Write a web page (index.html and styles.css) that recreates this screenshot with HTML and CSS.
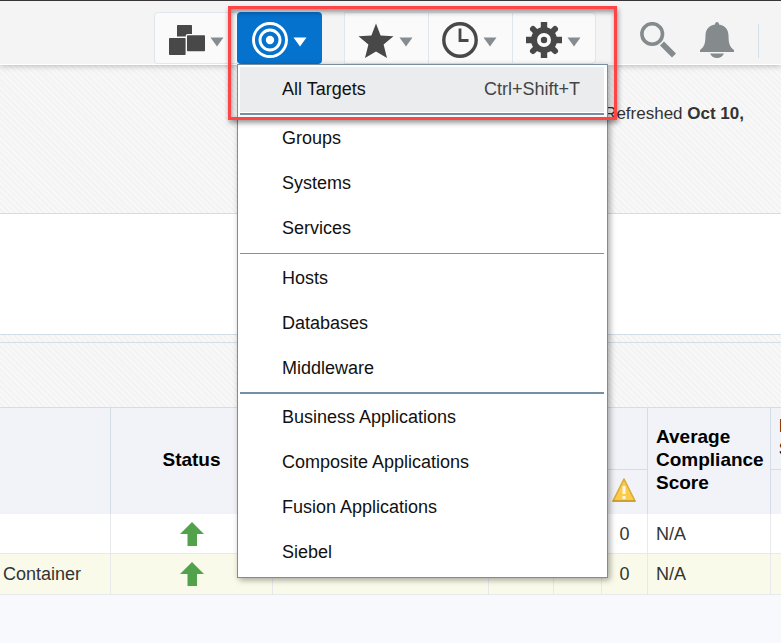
FILE: index.html
```html
<!DOCTYPE html>
<html lang="en">
<head>
<meta charset="utf-8">
<title>Targets</title>
<link rel="stylesheet" href="styles.css">
</head>
<body>
<header class="toolbar">
  <nav class="menus" aria-label="Main">
    <button class="tool first" type="button" aria-label="Enterprise">
      <svg class="icon" viewBox="0 0 36 36"><g fill="#484848" stroke="#fafafa" stroke-width="1.4"><rect x="7.3" y="2.3" width="16.4" height="16.4" rx="1.5"/><rect x="17.3" y="12.6" width="19.4" height="17.4" rx="1.5"/><rect x="-.7" y="15.3" width="18" height="18.4" rx="1.5"/></g></svg>
      <svg class="caret" viewBox="0 0 14 10"><path d="M.5.5h13L7 9.5z"/></svg>
    </button>
    <div class="menu-anchor">
      <button class="tool active" type="button" aria-label="Targets" aria-expanded="true">
        <svg class="icon" viewBox="0 0 36 36"><g fill="none" stroke="#fff" stroke-width="2.9"><circle cx="18" cy="18" r="16.5"/><circle cx="18" cy="18" r="10"/></g><circle cx="18" cy="18" r="4.2" fill="#fff"/></svg>
        <svg class="caret" viewBox="0 0 14 10"><path d="M.5.5h13L7 9.5z"/></svg>
      </button>
      <div class="menu">
        <button class="item selected" type="button"><span>All Targets</span><kbd>Ctrl+Shift+T</kbd></button>
        <hr class="thick">
        <button class="item" type="button">Groups</button>
        <button class="item" type="button">Systems</button>
        <button class="item" type="button">Services</button>
        <hr>
        <button class="item" type="button">Hosts</button>
        <button class="item" type="button">Databases</button>
        <button class="item" type="button">Middleware</button>
        <hr class="thick">
        <button class="item" type="button">Business Applications</button>
        <button class="item" type="button">Composite Applications</button>
        <button class="item" type="button">Fusion Applications</button>
        <button class="item" type="button">Siebel</button>
      </div>
      <div class="callout"></div>
    </div>
    <div class="tool-group">
      <button class="tool" type="button" aria-label="Favorites">
        <svg class="icon" viewBox="0 0 36 36"><path fill="#484848" d="M18 1.5 22.6 13.6 35.5 14.200 25.600 22.500 29 36 18 29.500 7 36 10.400 22.500.5 14.200 13.400 13.600z"/></svg>
        <svg class="caret" viewBox="0 0 14 10"><path d="M.5.5h13L7 9.5z"/></svg>
      </button>
      <button class="tool" type="button" aria-label="History">
        <svg class="icon" viewBox="0 0 36 36"><circle cx="18" cy="18" r="16.200" fill="none" stroke="#484848" stroke-width="3.400"/><path d="M18 6.500V18.500H26.500" fill="none" stroke="#484848" stroke-width="2.800"/></svg>
        <svg class="caret" viewBox="0 0 14 10"><path d="M.5.5h13L7 9.5z"/></svg>
      </button>
      <button class="tool" type="button" aria-label="Setup">
        <svg class="icon" viewBox="0 0 36 36"><g fill="none" stroke="#484848"><circle cx="18" cy="18" r="10" stroke-width="6"/><path stroke-width="6.400" stroke-linejoin="round" d="M18 0v8M18 28v8M0 18h8M28 18h8"/><path stroke-width="6" stroke-linecap="round" d="M7 7l3 3M26 26l3 3M29 7l-3 3M10 26l-3 3"/></g><circle cx="18" cy="18" r="3.200" fill="#484848"/></svg>
        <svg class="caret" viewBox="0 0 14 10"><path d="M.5.5h13L7 9.5z"/></svg>
      </button>
    </div>
  </nav>
  <div class="actions">
    <button class="plain" type="button" aria-label="Search"><svg class="icon" viewBox="0 0 36 36"><circle cx="12.200" cy="12" r="10.300" fill="none" stroke="#858a8d" stroke-width="3.600"/><path d="m22 21.500 12 12" stroke="#858a8d" stroke-width="5.600"/></svg></button>
    <button class="plain" type="button" aria-label="Notifications"><svg class="icon" viewBox="0 0 36 36"><path fill="#858a8d" d="M16 2.500C16 .8 17 0 18 0s2 .8 2 2.500c6 .8 9.300 5 9.500 11 .2 8 1 11 5.500 14.500V30H1v-2c4.500-3.500 5.300-6.500 5.500-14.500.2-6 3.500-10.200 9.500-11zM11 31.500h14C23.500 34.500 21 36 18 36s-5.500-1.500-7-4.500z"/></svg></button>
    <span class="divider"></span>
  </div>
</header>
<main>
  <section class="summary striped">
    <p class="refreshed">Refreshed <b>Oct 10,</b></p>
  </section>
  <section class="filters"></section>
  <div class="gutter striped"></div>
  <section class="table-tools striped"></section>
  <div class="table-wrap">
    <table>
      <colgroup><col class="c-name"><col class="c-status"><col class="c-type"><col class="c-a"><col class="c-b"><col class="c-warn"><col class="c-score"><col></colgroup>
      <thead>
        <tr class="head-top">
          <th rowspan="2"></th>
          <th rowspan="2" class="center">Status</th>
          <th rowspan="2"></th>
          <th colspan="3" class="group"></th>
          <th rowspan="2">Average Compliance Score</th>
          <th class="group clipped">Member<br>Status</th>
        </tr>
        <tr class="head-sub">
          <th></th><th></th>
          <th class="center"><svg class="state" viewBox="0 0 24 24" role="img" aria-label="Warning"><path d="M12 1 23 23H1z" fill="#fccb4b" stroke="#d9ab35" stroke-width="1.600" stroke-linejoin="round"/><path d="M.5 23h23" stroke="#c89a2b" stroke-width="1.500"/><path d="M12 8v8M12 18v3" stroke="#fff8e0" stroke-width="3"/></svg></th>
          <th></th>
        </tr>
      </thead>
      <tbody>
        <tr>
          <td></td>
          <td class="center"><svg class="state" viewBox="0 0 24 24" role="img" aria-label="Up"><path d="M12 0 24 12H17V24H7.500V12H0z" fill="#52a14b"/></svg></td>
          <td></td><td></td><td></td><td class="center">0</td><td>N/A</td><td></td>
        </tr>
        <tr class="alt">
          <td class="name">Container</td>
          <td class="center"><svg class="state" viewBox="0 0 24 24" role="img" aria-label="Up"><path d="M12 0 24 12H17V24H7.500V12H0z" fill="#52a14b"/></svg></td>
          <td></td><td></td><td></td><td class="center">0</td><td>N/A</td><td></td>
        </tr>
      </tbody>
    </table>
  </div>
</main>
</body>
</html>
```
FILE: styles.css
```css
* { box-sizing: border-box; }
body {
  margin: 0;
  background: #f8f9fd;
  color: #333;
  font: 18px/22px "Liberation Sans", Arial, sans-serif;
  overflow: hidden;
}
button { margin: 0; font: inherit; cursor: pointer; }

.toolbar {
  position: relative;
  z-index: 2;
  display: flex;
  justify-content: flex-end;
  height: 65px;
  padding: 11px 22px 0 0;
  border-top: 1px solid #39363a;
  border-bottom: 1px solid #fff;
  background: #f4f4f4;
  box-shadow: 0 1px 6px rgba(0, 0, 0, .25);
}
.menus { display: flex; }
.menu-anchor { position: relative; margin-right: 22px; }
.tool-group { display: flex; }
.tool {
  display: flex;
  align-items: center;
  gap: 5px;
  width: 84px;
  height: 52px;
  padding: 4px 0 0 14px;
  border: 1px solid #dfe7ec;
  border-right-width: 0;
  border-radius: 4px 0 0 4px;
  background: #fafafa;
}
.tool.first { width: 83px; }
.tool-group .tool { padding-left: 13px; border-radius: 0; }
.tool-group .tool:last-child { border-right-width: 1px; border-radius: 0 4px 4px 0; }
.tool.active {
  border: 0;
  border-radius: 4px;
  background: #0572ce;
  width: 85px;
  padding-left: 15px;
}
.icon { display: block; flex: none; width: 36px; height: 36px; }
.caret { flex: none; width: 14px; height: 10px; margin-top: 4px; fill: #858d92; }
.active .caret { fill: #fff; }

.actions { display: flex; gap: 23px; margin-left: 44px; padding-top: 10px; }
.plain { height: 36px; padding: 0; border: 0; background: none; }
.divider { width: 1px; height: 34px; margin-top: 2px; background: #d2dfe7; }

.menu {
  position: absolute;
  top: 52px;
  left: 0;
  width: 371px;
  padding: 2px 3px 2px 2px;
  border: 1px solid #768fa3;
  background: #fff;
  box-shadow: 2px 2px 6px rgba(0, 0, 0, .35);
}
.item {
  display: flex;
  align-items: center;
  justify-content: space-between;
  width: 100%;
  height: 45px;
  padding: 0 24px 2px 42px;
  border: 0;
  background: none;
  color: #111;
  text-align: left;
}
.item.selected { background: #ebeced; }
.item kbd { font: inherit; color: #444; }
.menu hr { height: 1px; margin: 2px 0; border: 0; background: #8a8f94; }
.menu hr.thick { height: 2px; margin: 1px 0; background: #768fa3; }
.callout {
  position: absolute;
  top: -6px;
  left: -9px;
  width: 389px;
  height: 114px;
  border: 3px solid #fe4444;
  box-shadow: 1px 3px 5px rgba(0, 0, 0, .4), inset 1px 3px 5px rgba(0, 0, 0, .4);
  pointer-events: none;
}

.striped { background: repeating-linear-gradient(45deg, #f8f8f8 0 2px, #f3f3f3 2px 4px); }
.summary { height: 149px; padding: 38px 37px 0 0; border-bottom: 1px solid #d3dde6; }
.refreshed { margin: 0; font-size: 17px; text-align: right; }
.filters { height: 121px; border-bottom: 1px solid #d3dde6; background: #fff; }
.gutter { height: 8px; border-bottom: 1px solid #d3dde6; }
.table-tools { height: 64px; }

.table-wrap { overflow: hidden; border-top: 1px solid #d3dde6; }
table { width: 100%; table-layout: fixed; border-spacing: 0; }
.c-name { width: 111px; }
.c-status { width: 162px; }
.c-type { width: 216px; }
.c-a { width: 65px; }
.c-b { width: 48px; }
.c-warn { width: 46px; }
.c-score { width: 123px; }
th, td { padding: 0 0 0 8px; text-align: left; }
th {
  padding-bottom: 3px;
  border-right: 1px solid #d3dde6;
  background: #f2f3f8;
  color: #000;
  font-size: 19px;
  line-height: 23px;
}
th.group { border-bottom: 1px solid #d3dde6; }
th.clipped { overflow: hidden; white-space: nowrap; }
td {
  height: 40px;
  border-right: 1px solid #e8e9ec;
  border-bottom: 1px solid #e8e9ec;
  background: #fff;
}
.alt td { height: 41px; background: #f9fae9; }
th:last-child, td:last-child { border-right: 0; }
th.center { padding: 0 0 3px; text-align: center; }
td.center { padding: 0; text-align: center; }
td.name { padding-left: 3px; }
.head-top { height: 62px; }
.head-sub { height: 44px; }
.head-sub th.center { padding: 0 2px 5px 0; }
.state { display: block; width: 24px; height: 24px; margin: 0 auto; }
```
